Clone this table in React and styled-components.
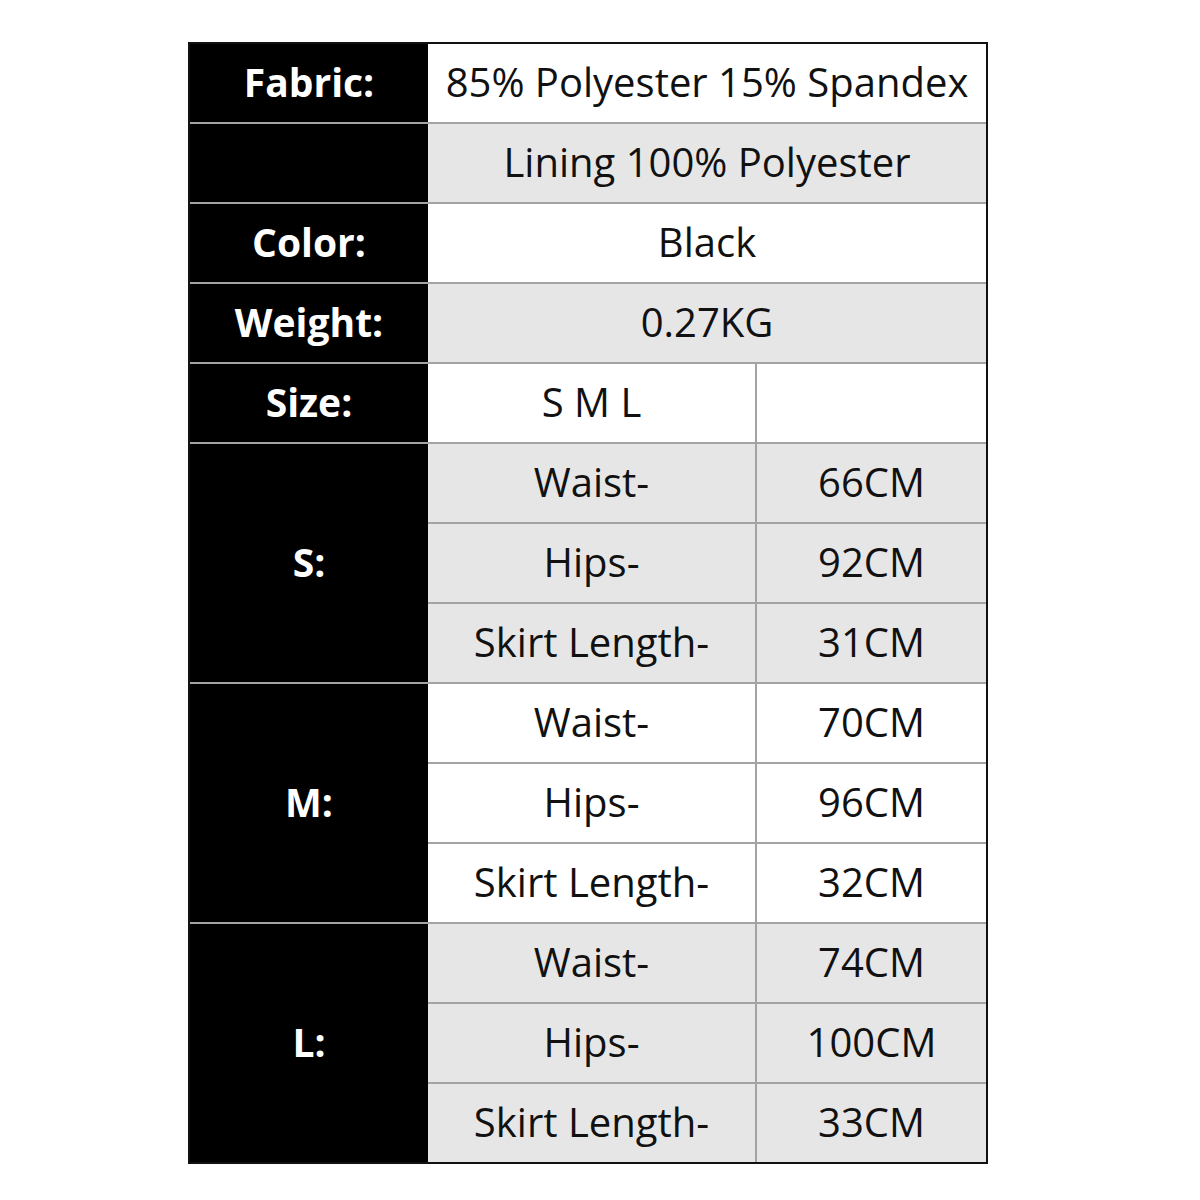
import styled, { createGlobalStyle } from 'styled-components';

const GlobalStyle = createGlobalStyle`
  html, body {
    margin: 0;
    padding: 0;
    background: #fff;
  }
  body {
    font-family: "Open Sans", "Liberation Sans", sans-serif;
  }
`;

const Page = styled.div`
  width: 1200px;
  height: 1200px;
  padding: 42px 0 0 188px;
  box-sizing: border-box;
`;

const Table = styled.div`
  width: 800px;
  box-sizing: border-box;
  border: 2px solid #111;
  background: #a3a3a3;
  display: grid;
  grid-template-columns: 238px 327px 1fr;
  grid-auto-rows: 78px;
  row-gap: 2px;
`;

const Label = styled.div`
  grid-column: 1;
  grid-row: ${(p) => p.$row} / span ${(p) => p.$span || 1};
  background: #000;
  color: #fff;
  font-weight: 700;
  font-size: 39px;
  display: flex;
  align-items: center;
  justify-content: center;
  padding-bottom: 3px;
`;

const Value = styled.div`
  grid-column: ${(p) => (p.$wide ? '2 / span 2' : p.$col)};
  grid-row: ${(p) => p.$row};
  background: ${(p) => (p.$shade ? '#e6e6e6' : '#fff')};
  border-left: ${(p) => (p.$col === 3 ? '2px solid #a3a3a3' : 'none')};
  color: #111;
  font-size: 40px;
  display: flex;
  align-items: center;
  justify-content: center;
  white-space: nowrap;
  padding-bottom: 3px;
`;

const sizes = [
  { name: 'S:', shade: true, rows: [['Waist-', '66CM'], ['Hips-', '92CM'], ['Skirt Length-', '31CM']] },
  { name: 'M:', shade: false, rows: [['Waist-', '70CM'], ['Hips-', '96CM'], ['Skirt Length-', '32CM']] },
  { name: 'L:', shade: true, rows: [['Waist-', '74CM'], ['Hips-', '100CM'], ['Skirt Length-', '33CM']] },
];

const App = () => {
  return (
    <Page>
      <GlobalStyle />
      <Table>
        <Label $row={1}>Fabric:</Label>
        <Value $row={1} $wide>85% Polyester 15% Spandex</Value>
        <Label $row={2} />
        <Value $row={2} $wide $shade>Lining 100% Polyester</Value>
        <Label $row={3}>Color:</Label>
        <Value $row={3} $wide>Black</Value>
        <Label $row={4}>Weight:</Label>
        <Value $row={4} $wide $shade>0.27KG</Value>
        <Label $row={5}>Size:</Label>
        <Value $row={5} $col={2}>S M L</Value>
        <Value $row={5} $col={3} />
        {sizes.map((s, i) => {
          const start = 6 + i * 3;
          return [
            <Label key={s.name} $row={start} $span={3}>{s.name}</Label>,
            ...s.rows.flatMap(([k, v], j) => [
              <Value key={s.name + k} $row={start + j} $col={2} $shade={s.shade}>{k}</Value>,
              <Value key={s.name + v} $row={start + j} $col={3} $shade={s.shade}>{v}</Value>,
            ]),
          ];
        })}
      </Table>
    </Page>
  );
};

export default App;
